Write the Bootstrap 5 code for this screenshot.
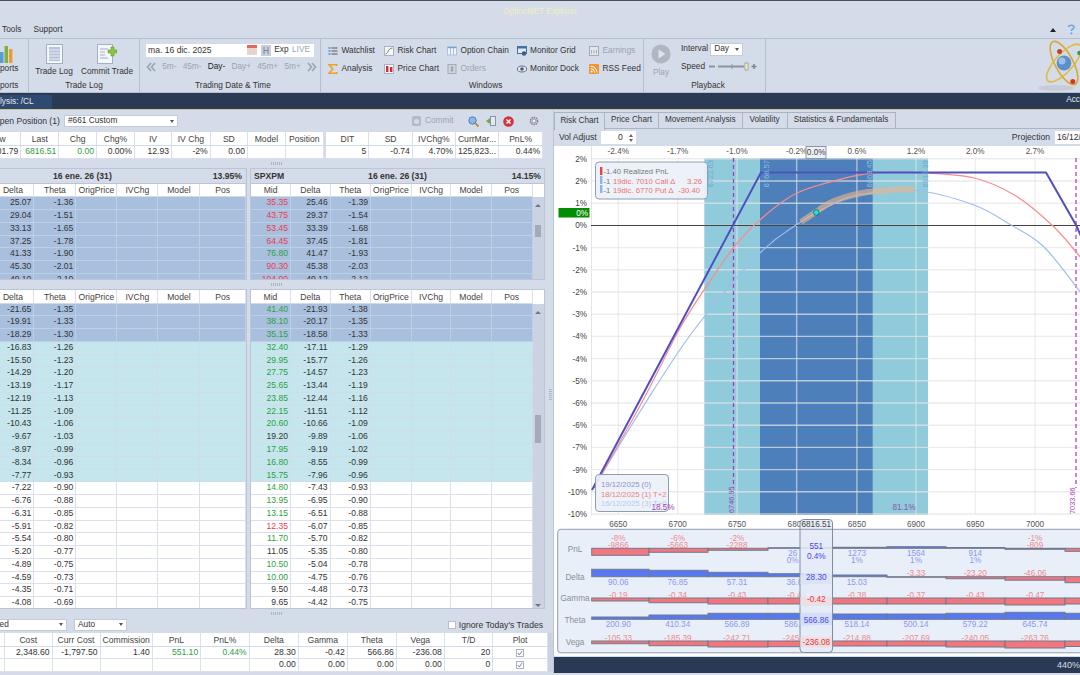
<!DOCTYPE html>
<html lang="en">
<head>
<meta charset="utf-8">
<title>OptionNET Explorer</title>
<link href="https://cdn.jsdelivr.net/npm/bootstrap@5.3.0/dist/css/bootstrap.min.css" rel="stylesheet">
<style>
html,body{width:1080px;height:675px;overflow:hidden;margin:0}
body{background:#d5dce9;color:#333;font:8.3px/1.2 "Liberation Sans",Arial,sans-serif}
.ox-title{height:22px;border-top:1px solid #4a4f5a;color:#f2ecc0;font-size:8.3px}
.ox-menu{height:15.5px;padding-left:2px;gap:12px;font-size:8.3px}
.ox-hgap{gap:11px}
.ox-ribbon{height:55px;border-top:1px solid #b4bfcf;border-bottom:1px solid #b4bfcf;overflow:hidden}
.ox-grp{border-right:1px solid #b4bfcf;flex:none;height:100%;position:relative}
.ox-body{height:40px;flex:none}
.ox-lab{height:14px;line-height:13px;text-align:center;color:#333}
.ox-g1{width:29px;overflow:hidden}.ox-g2{width:111px}.ox-g3{width:181px;padding-left:6px}.ox-g4{width:323px;padding-left:7px}.ox-g5{width:122px;padding-left:7px}
.ox-big{width:50px;padding-top:5px;flex:none}
.ox-big+.ox-big{width:56px}
.ox-big svg{display:block;margin:0 auto 3px;height:20px}
.ox-datebox{width:168px;height:13px;margin-top:5px;margin-bottom:5px;background:#fff;padding-left:2px}
.ox-date{font-size:8.6px}
.ox-dbtn{margin-right:3.5px}
.ox-spin{width:171px}
.ox-off{color:#9ba4b2}
.ox-wins{display:grid;grid-template-columns:56px 63px 69.5px 72.5px 50px;grid-auto-rows:17.4px;padding-top:4px}
.ox-w{display:flex;align-items:center;gap:3.5px;white-space:nowrap}
.ox-w svg{flex:none;width:10px;height:10px}
.ox-sel{background:#fff;height:12.5px;border:1px solid #c3cbd9;padding:0 3px}
.ox-sel::after{content:"";border:2.4px solid transparent;border-top:3px solid #555;margin-top:2px}
.ox-playbtn{margin-top:5px;margin-bottom:4px}
.ox-pctl{margin-left:10px}
.ox-intv{margin-top:4.5px;gap:2px}
.ox-intv .ox-sel{width:33px}
.ox-speed{margin-top:6px;gap:4px}
.ox-navy{height:16px;background:#2a3a55;color:#e6e9ef}
.ox-tabn{width:52px;height:14px;margin-top:2px;background:#2f4a70;text-align:right;padding-right:20px;line-height:13px;white-space:nowrap;overflow:hidden}
.ox-gold{height:1.6px;background:#cfc593}
.ox-work{height:564px}
.ox-left{width:553px;flex:none;overflow:hidden;position:relative}
.ox-pos{height:22px;position:relative}
.ox-pname{width:70px;margin-left:-7px;white-space:nowrap;font-size:8.6px;flex:none}
.ox-psel{width:114px;margin-left:1px;height:12px;flex:none}
.ox-tools{margin-left:auto;width:141px;padding-right:14px}
.ox-i7{margin-left:7px}.ox-i15{margin-left:15.5px}.ox-i4{margin-right:4px}
.ox-wrapq{height:27.4px;gap:2.7px}
.ox-gridbox{overflow:hidden;flex:none;background:#cbd3e2}
.ox-end{display:flex;justify-content:flex-end}
#q1{width:323.7px}
.ox-tbl.table{table-layout:fixed;border-collapse:separate;border-spacing:0;margin:0;width:auto;flex:none;--bs-table-bg:transparent;color:#333;font-size:8.6px}
.ox-tbl th,.ox-tbl td{padding:0 2px;height:12.78px;line-height:11px;border:0;border-right:1px solid #dbdeec;border-bottom:1px solid #dbdeec;overflow:hidden;white-space:nowrap;text-align:right;font-weight:400;box-shadow:none}
.ox-tbl th{background:#fff;text-align:center;height:13.8px;color:#444;border-bottom:1px solid #d4d9e6}
.ox-tbl td{background:#fff}
.ox-tbl tr.rb td{background:#a8c0de;border-color:#bccfe6}
.ox-tbl tr.rt td{background:#c5e6ec;border-color:#d1dcea}
.ox-tbl td.ox-g{color:#2ea043}.ox-tbl td.ox-r{color:#f0384c}
.ox-split{height:8.5px;display:flex;align-items:center;justify-content:center;position:relative}
.ox-dots{width:12px;height:3px;background:repeating-linear-gradient(90deg,#aeb6c5 0 1px,transparent 1px 2px)}
.ox-capt{height:14.6px;font-weight:700;background:#d5dce9;padding:0 3px;border-bottom:1px solid #bcc5d4;font-size:8.6px;color:#333;display:grid;grid-template-columns:1fr 1fr 1fr;align-items:center}
.ox-capt span:nth-child(2){text-align:center;white-space:nowrap}.ox-capt span:nth-child(3){text-align:right}
.ox-capl{display:flex;justify-content:space-between;padding-left:53px;padding-right:4px}
.ox-up{height:112.3px;gap:3px}
.ox-dn{height:320.5px;gap:3px}
.ox-lt{width:247px}.ox-rt{width:295px}
.ox-pane{border:1px solid #bcc5d4;border-left:0}
.ox-rt.ox-pane{border-left:1px solid #bcc5d4}
.ox-bar{width:11.5px;flex:none;display:flex;flex-direction:column;background:#cbd3e2}
.ox-bar i{display:block}
.ox-bhead{height:13.8px;background:#fff;flex:none;margin-bottom:4px}
.ox-up-a,.ox-dn-a{width:0;height:0;border:3px solid transparent;margin:3px auto}
.ox-up-a{border-bottom:3.5px solid #6c7688;border-top:0}
.ox-dn-a{border-top:3.5px solid #6c7688;border-bottom:0}
.ox-thumb{width:6px;background:#a3abb9;margin:0 auto}
.ox-gapu{height:15px;flex:none}.ox-thu{height:12px}
.ox-gapd{height:98px;flex:none}.ox-thd{height:28px}
.ox-ctl{height:15px;gap:7px;padding-bottom:1px}
.ox-s1{width:82px;margin-left:-15px;flex:none}.ox-s2{width:53px}
.ox-chk{margin-left:auto;margin-right:10px;gap:3px;font-size:8.6px}
.ox-box{width:8px;height:8px;background:#fff;border:1px solid #b6becd;display:inline-block}
.ox-tick{display:inline-flex;width:8px;height:8px;background:#fff;border:1px solid #aab2c0;align-items:center;justify-content:center;vertical-align:-1px}
.ox-right{width:527px;flex:none;border-left:1px solid #bcc5d4;position:relative}
.ox-tabs{height:19px;border-bottom:1px solid #aab4c4;padding-top:1.5px;font-size:8.2px}
.ox-tb{border:1px solid #aab4c4;border-left:0;display:flex;align-items:center;justify-content:center;height:17.5px;background:#d5dce9;white-space:nowrap;flex:none}
.ox-tb.on{border-left:1px solid #aab4c4;border-bottom:0;height:18px;width:51px}
.ox-t2{width:54px}.ox-t3{width:83.5px}.ox-t4{width:45px}.ox-t5{width:108px}
.ox-va{height:17px;padding-left:5px;font-size:8.6px}
.ox-num{background:#fff;height:13px;width:35px;margin-left:4px;padding-right:13px;position:relative;line-height:13px;text-align:right}
.ox-num::before,.ox-num::after{content:"";position:absolute;right:3px;border:2.5px solid transparent}
.ox-num::before{top:0.5px;border-bottom:3px solid #666}
.ox-num::after{bottom:0.5px;border-top:3px solid #666}
.ox-prj{margin-left:auto;gap:5px}
.ox-prji{background:#fff;height:13px;width:25px;padding-left:2px;line-height:13px;white-space:nowrap;overflow:hidden;box-sizing:border-box}
.ox-svg{display:block;width:527px;height:510px;background:#fff;font-family:"Liberation Sans",Arial,sans-serif}
.ox-foot{height:16.5px;background:#2a3a55;color:#d8dde6;margin-top:.5px;line-height:16px;text-align:right;font-size:9px}
.ox-vsp{position:absolute;left:549px;top:278px;width:3px;height:12px;background:repeating-linear-gradient(0deg,#aeb6c5 0 1px,transparent 1px 2px)}
</style>
</head>
<body>
<div class="ox-title d-flex align-items-center justify-content-center">OptionNET Explorer</div>
<div class="ox-menu d-flex align-items-center">
  <span>Tools</span><span>Support</span>
  <span class="ms-auto d-flex align-items-center ox-hgap pe-1">
    <svg width="6" height="4" viewBox="0 0 6 4"><path d="M0 4 3 0 6 4z" fill="#222"/></svg>
    <svg width="9" height="11" viewBox="0 0 9 11"><path d="M1.5 3C2 .8 7 .6 7 3.2 7 5 4.4 5 4.4 7" fill="none" stroke="#6aa8dc" stroke-width="1.6"/><circle cx="4.4" cy="9.4" r="1.1" fill="#6aa8dc"/></svg>
  </span>
</div>
<div class="ox-ribbon d-flex">
  <div class="ox-grp ox-g1 d-flex flex-column">
    <div class="ox-body">
      <div class="d-flex justify-content-start">
        <svg class="mt-1" width="14" height="21" viewBox="0 0 14 21"><rect x="0" y="9" width="3.5" height="11" fill="#5b9bd5"/><rect x="4.5" y="3" width="3.5" height="17" fill="#7cb342"/><rect x="9" y="6" width="3.5" height="14" fill="#ee9a3a"/></svg>
      </div>
      <div>ports</div>
    </div>
    <div class="ox-lab text-start">ports</div>
  </div>
  <div class="ox-grp ox-g2 d-flex flex-column">
    <div class="ox-body d-flex">
      <div class="ox-big text-center"><svg width="17" height="20" viewBox="0 0 17 20"><rect x=".5" y=".5" width="16" height="19" fill="#f4f6fa" stroke="#9fb0c8"/><rect x="3" y="3" width="11" height="14" fill="#b4c3da"/><path d="M3 6h11M3 9h11M3 12h11M3 15h11" stroke="#e8edf5"/></svg>Trade Log</div>
      <div class="ox-big text-center"><svg width="20" height="20" viewBox="0 0 20 20"><rect x=".5" y=".5" width="15" height="19" fill="#f4f6fa" stroke="#9fb0c8"/><path d="M3 5h8M3 8h5M3 11h5M3 14h8" stroke="#9cadc6"/><path d="M11 6h3V3h3v3h3v3h-3v3h-3V9h-3z" fill="#8cc63f" stroke="#5f9a22" stroke-width=".6"/></svg>Commit Trade</div>
    </div>
    <div class="ox-lab">Trade Log</div>
  </div>
  <div class="ox-grp ox-g3 d-flex flex-column">
    <div class="ox-body">
      <div class="ox-datebox d-flex align-items-center">
        <span class="ox-date">ma. 16 dic. 2025</span>
        <svg class="ms-auto ox-dbtn" width="10" height="10" viewBox="0 0 10 10"><rect width="10" height="10" fill="#f3d5c8"/><rect width="10" height="3" fill="#e2685a"/><path d="M0 5h10M0 7.5h10M3.3 3v7M6.6 3v7" stroke="#c6d2e2" stroke-width=".5"/></svg>
        <svg class="ox-dbtn" width="10" height="11" viewBox="0 0 10 11"><rect width="10" height="11" fill="#c7ced9"/><path d="M3 2v7M7 2v7M3 5.5h4" stroke="#7c8696"/></svg>
        <span class="ox-dbtn">Exp</span><span class="ox-off pe-1">LIVE</span>
      </div>
      <div class="ox-spin d-flex align-items-center justify-content-between ox-off">
        <svg width="10" height="10" viewBox="0 0 10 10"><path d="M5 1 1.5 5 5 9M9 1 5.5 5 9 9" fill="none" stroke="#9ba4b2" stroke-width="1.7"/></svg>
        <span>5m-</span><span>45m-</span><span class="text-dark">Day-</span><span>Day+</span><span>45m+</span><span>5m+</span>
        <svg width="10" height="10" viewBox="0 0 10 10"><path d="M5 1 8.5 5 5 9M1 1 4.5 5 1 9" fill="none" stroke="#9ba4b2" stroke-width="1.7"/></svg>
      </div>
    </div>
    <div class="ox-lab">Trading Date &amp; Time</div>
  </div>
  <div class="ox-grp ox-g4 d-flex flex-column">
    <div class="ox-body ox-wins">
      <div class="ox-w"><svg viewBox="0 0 10 10"><path d="M3.5 2h6M3.5 5h6M3.5 8h6" stroke="#555" stroke-width="1"/><path d="M.5 2h2M.5 5h2M.5 8h2" stroke="#4a90d9" stroke-width="1.5"/></svg>Watchlist</div>
      <div class="ox-w"><svg viewBox="0 0 10 10"><rect x=".5" y=".5" width="9" height="9" fill="#f4f6fa" stroke="#a8b3c4"/><path d="M1.5 8C4 8 4 2 8.5 2" fill="none" stroke="#62a04a"/></svg>Risk Chart</div>
      <div class="ox-w"><svg viewBox="0 0 10 10"><rect x=".5" y="1" width="9" height="8" fill="#eef3fa" stroke="#a9c4e2"/><path d="M3.5 1v8M6.5 1v8" stroke="#a9c4e2"/><path d="M.5 1.5h9" stroke="#6ea6dc" stroke-width="1.4"/></svg>Option Chain</div>
      <div class="ox-w"><svg viewBox="0 0 10 10"><rect x=".5" y=".5" width="9" height="7" fill="#dfe8f4" stroke="#46709f"/><rect x=".5" y=".5" width="9" height="2" fill="#46709f"/><circle cx="7" cy="7.5" r="2.3" fill="#3f5f85"/></svg>Monitor Grid</div>
      <div class="ox-w ox-off"><svg viewBox="0 0 10 10"><rect x=".5" y=".5" width="9" height="9" fill="#e3e6ec" stroke="#a5acb8"/><path d="M2.5 4v3.5M5 4v3.5M7.5 4v3.5" stroke="#a5acb8"/></svg>Earnings</div>
      <div class="ox-w"><svg viewBox="0 0 10 10"><path d="M8.8 2V.8H1l3.8 4.2L1 9.2h7.8V8" fill="none" stroke="#e8a326" stroke-width="1.5"/></svg>Analysis</div>
      <div class="ox-w"><svg viewBox="0 0 10 10"><rect x=".5" y=".5" width="9" height="9" fill="#f4f6fa" stroke="#a8b3c4"/><rect x="2" y="2" width="2.4" height="6" fill="#d92a2a"/><rect x="6" y="3" width="2.4" height="5" fill="#d92a2a"/></svg>Price Chart</div>
      <div class="ox-w ox-off"><svg viewBox="0 0 10 10"><rect x="1" y=".5" width="8" height="9" fill="#cfd4dc" stroke="#a5acb8"/><path d="M6.5 3.5C4 2.8 3.5 5 5 5s1.8 2.2-1.5 1.5M5 2v6" fill="none" stroke="#878f9c" stroke-width=".7"/></svg>Orders</div>
      <div class="ox-w"><svg viewBox="0 0 10 10"><ellipse cx="5" cy="5" rx="4.6" ry="3" fill="#dfe8f4" stroke="#6a7586"/><circle cx="5" cy="5" r="1.8" fill="#3f5f85"/></svg>Monitor Dock</div>
      <div class="ox-w"><svg viewBox="0 0 10 10"><rect width="10" height="10" rx="1" fill="#f0952d"/><circle cx="2.6" cy="7.6" r="1" fill="#fff"/><path d="M1.6 4.6a4 4 0 0 1 4 4M1.6 2.2a6.4 6.4 0 0 1 6.4 6.4" fill="none" stroke="#fff"/></svg>RSS Feed</div>
    </div>
    <div class="ox-lab">Windows</div>
  </div>
  <div class="ox-grp ox-g5 d-flex flex-column">
    <div class="ox-body d-flex">
      <div class="ox-off text-center">
        <svg class="d-block ox-playbtn" width="20" height="20" viewBox="0 0 20 20"><circle cx="10" cy="10" r="9.6" fill="#b1b7c2"/><path d="M7.5 5.5v9l7-4.5z" fill="#dfe3ea"/></svg>Play
      </div>
      <div class="ox-pctl flex-grow-1">
        <div class="d-flex align-items-center ox-intv"><span>Interval</span><span class="ox-sel d-flex align-items-center justify-content-between">Day</span></div>
        <div class="d-flex align-items-center ox-speed"><span>Speed</span>
          <svg width="50" height="9" viewBox="0 0 50 9"><rect x="0" y="3.5" width="6" height="2" fill="#8b94a3"/><path d="M9 4.5h26" stroke="#8b94a3" stroke-width="2"/><path d="M23 2v5" stroke="#8b94a3"/><rect x="36" y="1" width="3" height="7" fill="#f5eec2" stroke="#7a7f6a" stroke-width=".6"/><path d="M45 2v5M42.5 4.5h5" stroke="#7b8494" stroke-width="1.5"/></svg>
        </div>
      </div>
    </div>
    <div class="ox-lab">Playback</div>
  </div>
  <div class="flex-grow-1 d-flex justify-content-end overflow-hidden">
    <svg width="48" height="53" viewBox="0 0 48 53">
      <ellipse cx="24" cy="49" rx="18" ry="3" fill="#c7ccd6"/>
      <ellipse cx="32" cy="24" rx="24" ry="9" transform="rotate(62 32 24)" fill="none" stroke="#d9a92e" stroke-width="1.6"/>
      <ellipse cx="32" cy="24" rx="24" ry="9" transform="rotate(-48 32 24)" fill="none" stroke="#e3b93f" stroke-width="1.6"/>
      <circle cx="32" cy="24" r="7.4" fill="#5d8fc9"/><circle cx="30" cy="22" r="3.5" fill="#9cc0ea"/>
      <circle cx="27.6" cy="12.5" r="2.5" fill="#c1402f"/><circle cx="47.5" cy="14" r="2.3" fill="#3f9b3c"/><circle cx="40.8" cy="42.5" r="2.5" fill="#d4352c"/>
    </svg>
  </div>
</div>
<div class="ox-navy d-flex justify-content-between">
  <div class="ox-tabn">lysis: /CL</div>
  <div class="lh-base text-nowrap">Acc</div>
</div>
<div class="ox-gold"></div>
<div class="ox-work d-flex">
  <div class="ox-left">
    <div class="ox-pos d-flex align-items-center">
      <span class="ox-pname">Open Position (1)</span>
      <span class="ox-sel ox-psel d-flex align-items-center justify-content-between">#661 Custom</span>
      <div class="ox-tools d-flex align-items-center">
        <svg class="ox-i4" width="9" height="10" viewBox="0 0 9 10"><rect width="9" height="10" rx="1.5" fill="#b6bcc7"/><circle cx="4.5" cy="5.5" r="2.5" fill="#d7dbe2"/></svg>
        <span class="ox-off">Commit</span>
        <svg class="ms-auto" width="11" height="11" viewBox="0 0 11 11"><circle cx="4.5" cy="4.5" r="3.7" fill="#8cb9e4" stroke="#4f7fb5"/><path d="M7.5 7.5 10.5 10.5" stroke="#c98a3a" stroke-width="2"/></svg>
        <svg class="ox-i7" width="10" height="10" viewBox="0 0 10 10"><rect x="4.5" y=".5" width="5" height="9" fill="#e4e9f1" stroke="#8a96a8"/><path d="M0 5 4 2v6z" fill="#74a83f"/></svg>
        <svg class="ox-i7" width="11" height="11" viewBox="0 0 11 11"><circle cx="5.5" cy="5.5" r="5.3" fill="#d3343a"/><path d="M3.5 3.5l4 4M7.5 3.5l-4 4" stroke="#fff" stroke-width="1.4"/></svg>
        <svg class="ox-i15" width="10" height="10" viewBox="0 0 10 10"><circle cx="5" cy="5" r="3.6" fill="none" stroke="#7f8897" stroke-width="1.5" stroke-dasharray="1.6 .7"/><circle cx="5" cy="5" r="2" fill="#eef1f5" stroke="#7f8897" stroke-width=".8"/></svg>
      </div>
    </div>
    <div class="ox-wrapq d-flex">
      <div id="q1" class="ox-gridbox ox-end"></div>
      <div id="q2" class="ox-gridbox"></div>
    </div>
    <div class="ox-split"><div class="ox-dots"></div></div>
    <div class="ox-up d-flex">
      <div class="ox-gridbox ox-lt ox-pane">
        <div class="ox-capt ox-capl"><span>16 ene. 26 (31)</span><span>13.95%</span></div>
        <div id="u1" class="ox-end"></div>
      </div>
      <div class="ox-gridbox ox-rt ox-pane">
        <div class="ox-capt"><span>SPXPM</span><span>16 ene. 26 (31)</span><span>14.15%</span></div>
        <div class="d-flex"><div id="u2"></div>
          <div class="ox-bar"><div class="ox-bhead"></div><i class="ox-up-a"></i><div class="ox-gapu"></div><div class="ox-thumb ox-thu"></div><div class="flex-grow-1"></div><i class="ox-dn-a"></i></div>
        </div>
      </div>
    </div>
    <div class="ox-split"><div class="ox-dots"></div></div>
    <div class="ox-dn d-flex">
      <div class="ox-gridbox ox-lt ox-pane"><div id="d1" class="ox-end"></div></div>
      <div class="ox-gridbox ox-rt ox-pane">
        <div class="d-flex"><div id="d2"></div>
          <div class="ox-bar"><div class="ox-bhead"></div><i class="ox-up-a"></i><div class="ox-gapd"></div><div class="ox-thumb ox-thd"></div><div class="flex-grow-1"></div><i class="ox-dn-a"></i></div>
        </div>
      </div>
    </div>
    <div class="ox-split"><div class="ox-dots"></div></div>
    <div class="ox-ctl d-flex align-items-center">
      <span class="ox-sel ox-s1 d-flex align-items-center justify-content-between">Filled</span>
      <span class="ox-sel ox-s2 d-flex align-items-center justify-content-between">Auto</span>
      <span class="ox-chk d-flex align-items-center"><i class="ox-box"></i>Ignore Today's Trades</span>
    </div>
    <div id="b1" class="ox-gridbox"></div>
    <div class="ox-vsp"></div>
  </div>
  <div class="ox-right">
    <div class="ox-tabs d-flex">
      <div class="ox-tb on">Risk Chart</div>
      <div class="ox-tb ox-t2">Price Chart</div>
      <div class="ox-tb ox-t3">Movement Analysis</div>
      <div class="ox-tb ox-t4">Volatility</div>
      <div class="ox-tb ox-t5">Statistics &amp; Fundamentals</div>
    </div>
    <div class="ox-va d-flex align-items-center">
      <span>Vol Adjust</span>
      <span class="ox-num">0</span>
      <span class="ox-prj d-flex align-items-center"><span>Projection</span><span class="ox-prji">16/12/2025</span></span>
    </div>
    <svg id="chart" class="ox-svg" viewBox="553 146 527 510"></svg>
    <div class="ox-foot">440%</div>
  </div>
</div>
<script src="https://cdn.jsdelivr.net/npm/bootstrap@5.3.0/dist/js/bootstrap.bundle.min.js"></script>
<script>
function grid(id,widths,heads,rows,cls){
  var h='<table class="table ox-tbl"><colgroup>'+widths.map(function(w){return '<col width="'+w+'">'}).join('')+'</colgroup>';
  if(heads)h+='<thead><tr>'+heads.map(function(t){return '<th>'+t+'</th>'}).join('')+'</tr></thead>';
  h+='<tbody>'+rows.map(function(r,i){return '<tr class="'+(cls?cls(i):'')+'">'+widths.map(function(_,j){
    var v=r[j]===undefined?'':r[j],c='';
    if(typeof v==='string'&&v[0]==='+'){c='ox-g';v=v.slice(1)}
    else if(typeof v==='string'&&v[0]==='^'){c='ox-r';v=v.slice(1)}
    return '<td class="'+c+'">'+v+'</td>'}).join('')+'</tr>'}).join('')+'</tbody></table>';
  document.getElementById(id).innerHTML=h;
}
function parse(s){return s.trim().split(/\s*;\s*/).map(function(r){return r.split(/\s+/)})}
var W1=[42,42,41,41,42,45.6],W2=[40.4,40,40.7,40.3,40,40.7,41.4];
var H1=['Delta','Theta','OrigPrice','IVChg','Model','Pos'],H2=['Mid','Delta','Theta','OrigPrice','IVChg','Model','Pos'];
grid('q1',[46,37.9,37.8,38,37,38.7,37.3,37.8,37.9],['Low','Last','Chg','Chg%','IV','IV Chg','SD','Model','Position'],[['6801.79','+6816.51','+0.00','0.00%','12.93','-2%','0.00','','']]);
grid('q2',[43,43.5,43,43,44],['DIT','SD','IVChg%','CurrMar...','PnL%'],[['5','-0.74','4.70%','125,823...','0.44%']]);
grid('u1',W1,H1,parse('25.07 -1.36;29.04 -1.51;33.13 -1.65;37.25 -1.78;41.33 -1.90;45.30 -2.01;49.10 -2.10'),function(){return 'rb'});
grid('u2',W2,H2,parse('^35.35 25.46 -1.39;^43.75 29.37 -1.54;^53.45 33.39 -1.68;^64.45 37.45 -1.81;+76.80 41.47 -1.93;^90.30 45.38 -2.03;^104.00 49.12 -2.12'),function(){return 'rb'});
var rc=function(i){return i<3?'rb':i<14?'rt':''};
grid('d1',W1,H1,parse('-21.65 -1.35;-19.91 -1.33;-18.29 -1.30;-16.83 -1.26;-15.50 -1.23;-14.29 -1.20;-13.19 -1.17;-12.19 -1.13;-11.25 -1.09;-10.43 -1.06;-9.67 -1.03;-8.97 -0.99;-8.34 -0.96;-7.77 -0.93;-7.22 -0.90;-6.76 -0.88;-6.31 -0.85;-5.91 -0.82;-5.54 -0.80;-5.20 -0.77;-4.89 -0.75;-4.59 -0.73;-4.35 -0.71;-4.08 -0.69'),rc);
grid('d2',W2,H2,parse('+41.40 -21.93 -1.38;+38.10 -20.17 -1.35;+35.15 -18.58 -1.33;+32.40 -17.11 -1.29;+29.95 -15.77 -1.26;+27.75 -14.57 -1.23;+25.65 -13.44 -1.19;+23.85 -12.44 -1.16;+22.15 -11.51 -1.12;+20.60 -10.66 -1.09;19.20 -9.89 -1.06;+17.95 -9.19 -1.02;+16.80 -8.55 -0.99;+15.75 -7.96 -0.96;+14.80 -7.43 -0.93;+13.95 -6.95 -0.90;+13.15 -6.51 -0.88;^12.35 -6.07 -0.85;+11.70 -5.70 -0.82;11.05 -5.35 -0.80;+10.50 -5.04 -0.78;+10.00 -4.75 -0.76;9.50 -4.48 -0.73;9.65 -4.42 -0.75'),rc);
var tick='<span class="ox-tick"><svg width="6" height="6" viewBox="0 0 6 6"><path d="M.8 3 2.3 5 5.2 .8" fill="none" stroke="#7a8494"/></svg></span>';
grid('b1',[3.5,47.5,48,49,48.4,48.6,49,49,49,48,48.6,54.4],['','Cost','Curr Cost','Commission','PnL','PnL%','Delta','Gamma','Theta','Vega','T/D','Plot'],[
  ['','2,348.60','-1,797.50','1.40','+551.10','+0.44%','28.30','-0.42','566.86','-236.08','20',tick],
  ['','','','','','','0.00','0.00','0.00','0.00','0',tick]]);
document.querySelectorAll('#b1 td:last-child').forEach(function(td){td.classList.add('text-center')});

/* chart */
var s='';
function L(x1,y1,x2,y2,c,w,extra){s+='<line x1="'+x1+'" y1="'+y1+'" x2="'+x2+'" y2="'+y2+'" stroke="'+c+'" stroke-width="'+(w||1)+'" '+(extra||'')+'/>'}
function R(x,y,w,h,f,st){s+='<rect x="'+x+'" y="'+y+'" width="'+w+'" height="'+h+'" fill="'+f+'"'+(st?' stroke="'+st+'" stroke-width="1"':'')+'/>'}
function T(x,y,t,c,a,z,extra){s+='<text x="'+x+'" y="'+y+'" fill="'+c+'" text-anchor="'+(a||'middle')+'" font-size="'+(z||8.2)+'" '+(extra||'')+'>'+t+'</text>'}
function C(p,c,w,extra){var d='M'+p[0][0]+' '+p[0][1];for(var i=0;i<p.length-1;i++){var a=p[i-1]||p[i],b=p[i],e=p[i+1],f=p[i+2]||e;
  d+='C'+(b[0]+(e[0]-a[0])/6).toFixed(1)+' '+(b[1]+(e[1]-a[1])/6).toFixed(1)+' '+(e[0]-(f[0]-b[0])/6).toFixed(1)+' '+(e[1]-(f[1]-b[1])/6).toFixed(1)+' '+e[0]+' '+e[1]}
  s+='<path d="'+d+'" fill="none" stroke="'+c+'" stroke-width="'+w+'" '+(extra||'')+'/>'}
function V(x,y,t,c,z){T(x,y,t,c,'start',z,'transform="rotate(-90 '+x+' '+y+')"')}
var ys=[],yl=['2%','2%','1%','0%','-1%','-2%','-2%','-3%','-4%','-4%','-5%','-6%','-6%','-7%','-9%','-10%','-10%'];
for(var k=0;k<17;k++)ys.push(158.8+k*22.2);
var vx=[617.3,676.7,736,795.7,855.9,915,974.3,1034];
R(703.3,158,223.7,357,'#90cbdb');R(759,158,112.7,357,'#4d80bb');
ys.forEach(function(y,i){L(590,y,1080,y,'rgba(228,228,228,.72)',1.4);T(586,y+3,yl[i],'#444','end')});
vx.forEach(function(x){L(x,158,x,515,'rgba(228,228,228,.72)',1.2)});
L(590.5,146,590.5,515,'#e4e4e4',1);
['-2.4%','-1.7%','-1.0%','-0.2%','0.6%','1.2%','2.0%','2.7%'].forEach(function(t,i){T(vx[i],154,t,'#555')});
R(805,146.5,20,12,'#eef1f6','#8a95a5');T(815.2,155,'0.0%','#444');
L(732.5,158,732.5,488,'#b030c4',1.2,'stroke-dasharray="4 3"');L(1075,158,1075,488,'#b030c4',1.2,'stroke-dasharray="4 3"');
V(732.5,513,'6746.95','#a83cb8',7.4);V(1074,514,'7033.66','#a83cb8',7.4);
L(590,225.5,1080,225.5,'#444',1);
C([[595,484],[640,410],[693,330],[757,255],[795,225],[830,205],[857,195],[915,190.5],[973,205],[1010,225],[1043,247],[1080,293]],'#9fbdf0',1.2);
C([[593,488],[640,404],[678,330],[703,290],[733,247],[760,219],[796,193],[850,176.7],[880,172.5],[915,172.5],[973,178],[1015,196],[1053,227],[1080,258]],'#f98a8e',1.2);
s+='<path d="M591 490 760 172.5H1045L1075 225 1080 236" fill="none" stroke="#4f50c0" stroke-width="2" stroke-linejoin="round"/>';
C([[800,222],[815,212],[833,201],[867,192],[913,189]],'rgba(232,180,140,.62)',6);
[[711.5,'6722.63','#6fa9d2'],[767.5,'6768.57','#8fbde2'],[870.5,'6863.45','#8fbde2'],[926.5,'6913.39','#6fa9d2']].forEach(function(a){V(a[0],187.5,a[1],a[2],7.6)});
s+='<circle cx="815.3" cy="212.5" r="2.8" fill="#17e6e6" stroke="#1e5a5a" stroke-width=".8"/>';
R(557.5,208,31,9.5,'#048c04');T(587,215.5,'0%','#fff','end');
T(903,510,'81.1%','#8a54b0');
/* legends */
s+='<rect x="594.5" y="162" width="112" height="37" rx="3.5" fill="#ecf1f9" fill-opacity=".92" stroke="#8c9db0"/>';
R(599,167,2.4,8,'#f04040');R(599,176,2.4,8,'#8fb2ec');R(599,185,2.4,8,'#8fb2ec');
T(602.5,174.4,'-1.40 Realized PnL','#777','start',7.7);
T(602.5,183.5,'-1','#777','start',7.7);T(612,183.5,'19dic. 7010 Call Δ','#f07070','start',7.7);T(701,183.5,'3.26','#f07070','end',7.7);
T(602.5,192.7,'-1','#777','start',7.7);T(612,192.7,'19dic. 6770 Put Δ','#f07070','start',7.7);T(699,192.7,'-30.40','#f07070','end',7.7);
s+='<rect x="594.5" y="474.5" width="73" height="37" rx="3.5" fill="#ecf1f9" fill-opacity=".92" stroke="#8c9db0"/>';
T(600,487,'19/12/2025 (0)','#8f90d8','start',7.7);T(600,496.5,'18/12/2025 (1) T+2','#f08080','start',7.7);T(600,505.5,'16/12/2025 (3) T+0','#b2ccf2','start',7.7);
T(662,510,'18.5%','#a83cb8');
[6650,6700,6750,6800,6850,6900,6950,7000].forEach(function(t,i){T(vx[i],526.5,t,'#555')});
/* lower panel */
s+='<rect x="556.7" y="529.3" width="540" height="123.5" rx="3" fill="#e8eff8" stroke="#8c9db0"/>';
['PnL','Delta','Gamma','Theta','Vega'].forEach(function(t,i){T(574,[552,579.5,601,623,644.5][i],t,'#8a8f98')});
var bx=[590.7,648,707,767,826,886,945,1004,1064,1123],RB='#f2767e',BB='#5878f0';
function bar(i,y1,y2,c){R(bx[i],Math.min(y1,y2),bx[i+1]-bx[i],Math.abs(y2-y1),c,'#6f7a8c')}
var pn=[[-7,'-8%','-9866'],[-4,'-6%','-5663'],[-2,'-2%','-2288'],[.6,'','2690'],[1,'1273','1%'],[1.6,'1564','1%'],[.8,'914','1%'],[-1,'-1%','-809'],[-3]];
pn.forEach(function(p,i){bar(i,548.3,548.3-p[0],p[0]<0?RB:BB);
 var cx=vx[i]||1094; if(i==8)return;
 if(p[0]<0){T(cx,540.5,p[1],'#ef8a90');T(cx,547.5,p[2],'#ef8a90')}
 else if(i==3){T(cx-4,556,'26','#8d96f0');T(cx-4,562.5,'0%','#8d96f0')}
 else{T(cx,556,p[1],'#8d96f0');T(cx,562.5,p[2],'#8d96f0')}});
var dl=[[7.4,'90.06'],[6.4,'76.85'],[4.4,'57.31'],[3,'36.86'],[1.7,'15.03'],[-.6,'-3.33'],[-2,'-23.20'],[-3.5,'-46.06'],[-6]];
dl.forEach(function(p,i){bar(i,576.7,576.7-p[0],p[0]<0?RB:BB);if(p[1]){if(p[0]<0)T(vx[i],576,p[1],'#ef8a90');else T(vx[i],584.5,p[1],'#8d96f0')}});
var gm=[[3,'-0.19'],[4.7,'-0.34'],[6,'-0.43'],[6,'-0.43'],[6,'-0.38'],[6,'-0.37'],[6,'-0.43'],[7,'-0.47'],[6]];
gm.forEach(function(p,i){bar(i,598,598+p[0],RB);if(p[1])T(vx[i],598,p[1],'#ef8a90')});
var th=[[2.3,'200.90'],[4.3,'410.34'],[6,'566.89'],[6,'586.60'],[5.3,'518.14'],[5.3,'500.14'],[6,'579.22'],[7,'645.74'],[6]];
th.forEach(function(p,i){bar(i,619.3,619.3-p[0],BB);if(p[1])T(vx[i],627,p[1],'#8d96f0')});
var vg=[[2.7,'-105.33'],[4.7,'-185.39'],[6,'-242.71'],[5.7,'-245.15'],[5,'-214.88'],[5,'-207.69'],[6,'-240.05'],[7,'-263.76'],[5.5]];
vg.forEach(function(p,i){bar(i,641,641+p[0],RB);if(p[1])T(vx[i],641,p[1],'#ef8a90')});
/* cursor */
s+='<rect x="799" y="519.5" width="32.5" height="133" rx="3.5" fill="#e4ebf6" fill-opacity=".88" stroke="#7f8ea3"/>';
R(799.6,575,31.2,9,'#dce4f4');R(799.6,597,31.2,9,'#ecdfe4');R(799.6,613,31.2,12,'#d3def6');R(799.6,637,31.2,10,'#ecdfe4');
L(799,529.3,831,529.3,'#8c9db0');T(815.3,526.5,'6816.51','#444');
T(815.3,549,'551','#4646f0');T(815.3,559,'0.4%','#4646f0');T(815.3,580,'28.30','#4646f0');T(815.3,602,'-0.42','#f03030');T(815.3,623,'566.86','#4646f0');T(815.3,645,'-236.08','#f03030');
document.getElementById('chart').innerHTML=s;
</script>
</body>
</html>
